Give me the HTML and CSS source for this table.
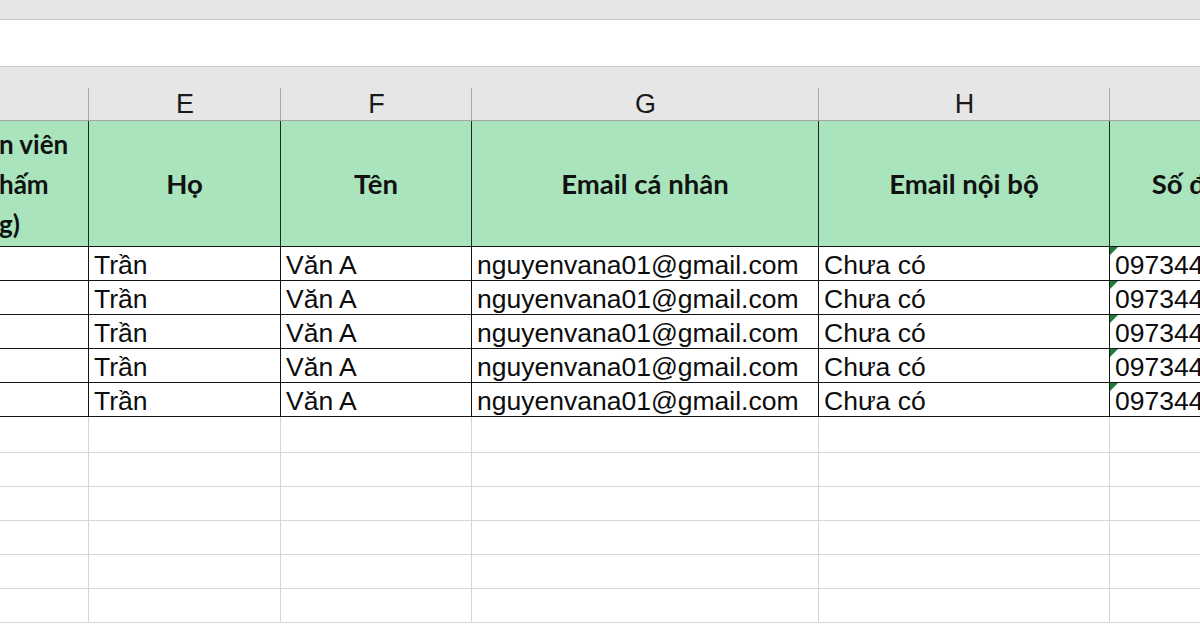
FILE: index.html
```html
<!DOCTYPE html>
<html lang="vi">
<head>
<meta charset="utf-8">
<title>Sheet</title>
<link rel="stylesheet" href="styles.css">
</head>
<body>
<div class="sheet">
  <div class="topbar"></div>
  <div class="formula"></div>
  <div class="grid colhead">
    <div class="ch"></div>
    <div class="ch">E</div>
    <div class="ch">F</div>
    <div class="ch">G</div>
    <div class="ch">H</div>
    <div class="ch">I</div>
  </div>
  <div class="grid hdr">
    <div class="hc hc-cut">n viên<br>hấm<br>g)</div>
    <div class="hc">Họ</div>
    <div class="hc">Tên</div>
    <div class="hc">Email cá nhân</div>
    <div class="hc">Email nội bộ</div>
    <div class="hc">Số điện thoại</div>
  </div>
  <div class="grid data">
    <div class="dc"></div><div class="dc">Trần</div><div class="dc">Văn A</div><div class="dc">nguyenvana01@gmail.com</div><div class="dc">Chưa có</div><div class="dc tri">0973445566</div>
  </div>
  <div class="grid data">
    <div class="dc"></div><div class="dc">Trần</div><div class="dc">Văn A</div><div class="dc">nguyenvana01@gmail.com</div><div class="dc">Chưa có</div><div class="dc tri">0973445566</div>
  </div>
  <div class="grid data">
    <div class="dc"></div><div class="dc">Trần</div><div class="dc">Văn A</div><div class="dc">nguyenvana01@gmail.com</div><div class="dc">Chưa có</div><div class="dc tri">0973445566</div>
  </div>
  <div class="grid data">
    <div class="dc"></div><div class="dc">Trần</div><div class="dc">Văn A</div><div class="dc">nguyenvana01@gmail.com</div><div class="dc">Chưa có</div><div class="dc tri">0973445566</div>
  </div>
  <div class="grid data">
    <div class="dc"></div><div class="dc">Trần</div><div class="dc">Văn A</div><div class="dc">nguyenvana01@gmail.com</div><div class="dc">Chưa có</div><div class="dc tri">0973445566</div>
  </div>
  <div class="grid empty"><div class="ec"></div><div class="ec"></div><div class="ec"></div><div class="ec"></div><div class="ec"></div><div class="ec"></div></div>
  <div class="grid empty"><div class="ec"></div><div class="ec"></div><div class="ec"></div><div class="ec"></div><div class="ec"></div><div class="ec"></div></div>
  <div class="grid empty"><div class="ec"></div><div class="ec"></div><div class="ec"></div><div class="ec"></div><div class="ec"></div><div class="ec"></div></div>
  <div class="grid empty"><div class="ec"></div><div class="ec"></div><div class="ec"></div><div class="ec"></div><div class="ec"></div><div class="ec"></div></div>
  <div class="grid empty"><div class="ec"></div><div class="ec"></div><div class="ec"></div><div class="ec"></div><div class="ec"></div><div class="ec"></div></div>
  <div class="grid empty"><div class="ec"></div><div class="ec"></div><div class="ec"></div><div class="ec"></div><div class="ec"></div><div class="ec"></div></div>
</div>
</body>
</html>
```
FILE: styles.css
```css
* { box-sizing: border-box; }
html, body {
  margin: 0;
  padding: 0;
  width: 1200px;
  height: 630px;
  overflow: hidden;
  background: #ffffff;
}
.sheet {
  width: 1200px;
  height: 630px;
  overflow: hidden;
  display: flex;
  flex-direction: column;
}
.topbar {
  height: 20px;
  flex: none;
  background: #e6e6e6;
  border-bottom: 1px solid #c9c9c9;
}
.formula {
  height: 47px;
  flex: none;
  background: #ffffff;
  border-bottom: 1px solid #c9c9c9;
}
.grid {
  display: grid;
  grid-template-columns: 89px 192px 191px 347px 291px 244px;
  flex: none;
  width: 1354px;
}
.colhead {
  height: 54px;
  background: #e6e6e6;
  border-bottom: 1px solid #9fa8a1;
}
.ch {
  display: flex;
  align-items: center;
  justify-content: center;
  padding-top: 21px;
  font-family: "Liberation Sans", Arial, sans-serif;
  font-size: 27px;
  color: #1a1a1a;
  background: linear-gradient(#a9a9a9, #a9a9a9) right bottom / 1px 32px no-repeat;
}
.hdr {
  height: 126px;
  background: #a9e4bc;
  border-bottom: 1px solid #151515;
}
.hc {
  display: flex;
  align-items: center;
  justify-content: center;
  text-align: center;
  border-right: 1px solid #1a2a1e;
  font-family: Lato, "Open Sans", sans-serif;
  font-weight: 700;
  font-size: 27.5px;
  line-height: 40px;
  color: #111111;
  overflow: hidden;
  white-space: nowrap;
}
.hc-cut {
  justify-content: flex-start;
  text-align: left;
  font-size: 26px;
  padding-left: 0;
  margin-left: -1px;
}
.data {
  height: 34px;
  border-bottom: 1px solid #151515;
}
.dc {
  display: flex;
  align-items: flex-end;
  padding-left: 5px;
  border-right: 1px solid #151515;
  font-family: "Liberation Sans", Arial, sans-serif;
  font-size: 26.5px;
  line-height: 30px;
  color: #0d0d0d;
  overflow: hidden;
  white-space: nowrap;
  position: relative;
}
.tri::before {
  content: "";
  position: absolute;
  top: 0;
  left: 0;
  border-top: 8px solid #1f7d35;
  border-right: 8px solid transparent;
}
.empty {
  height: 34px;
  border-bottom: 1px solid #d6d6d6;
}
.data + .empty {
  height: 36px;
}
.ec {
  border-right: 1px solid #d6d6d6;
}
```
